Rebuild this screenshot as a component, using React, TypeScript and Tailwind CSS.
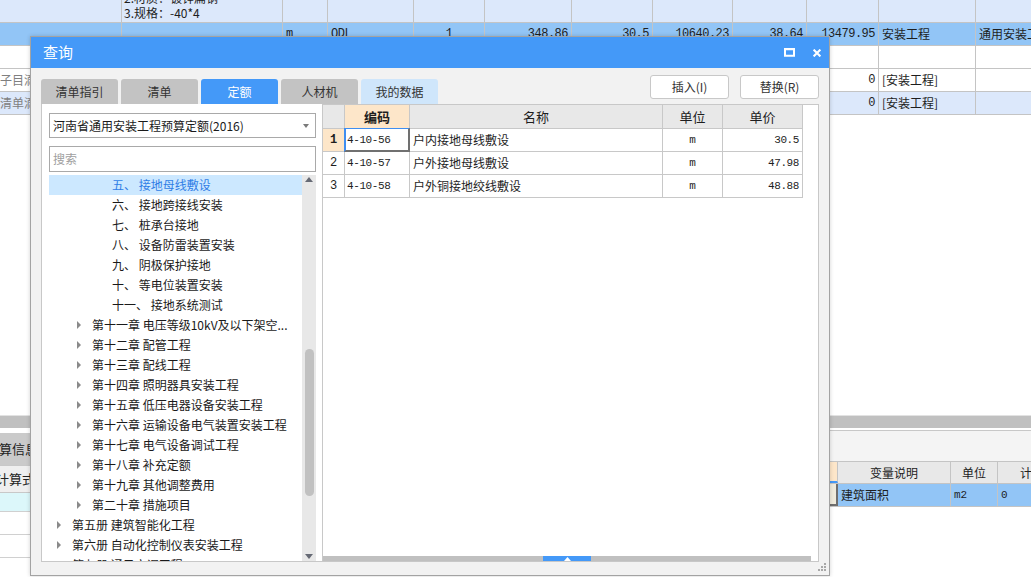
import React from "react";

const CJK = "font-['Noto_Sans_CJK_SC',sans-serif]";
const MONO = "font-['Liberation_Mono','Noto_Sans_CJK_SC',monospace]";

// ---- background sheet ----
const gridCols = [
  "w-[122px]",
  "w-[161px]",
  "w-[45px]",
  "w-[86px]",
  "w-[71px]",
  "w-[87px]",
  "w-[81px]",
  "w-[80px]",
  "w-[74px]",
  "w-[72px]",
  "w-[97px]",
  "w-[60px]",
];

type GCell = { t?: string; a?: "r" | "c"; mono?: boolean; muted?: boolean };

const gridRows: { bg: string; cells: GCell[] }[] = [
  {
    bg: "bg-[#92c5f6]",
    cells: [
      {},
      {},
      { t: "m", mono: true },
      { t: "QDL", mono: true },
      { t: "1", a: "c", mono: true },
      { t: "348.86", a: "r", mono: true },
      { t: "30.5", a: "r", mono: true },
      { t: "10640.23", a: "r", mono: true },
      { t: "38.64", a: "r", mono: true },
      { t: "13479.95", a: "r", mono: true },
      { t: "安装工程" },
      { t: "通用安装工程" },
    ],
  },
  { bg: "bg-white", cells: [{}, {}, {}, {}, {}, {}, {}, {}, {}, {}, {}, {}] },
  {
    bg: "bg-white",
    cells: [
      { t: "子目滴", muted: true },
      {}, {}, {}, {}, {}, {}, {}, {},
      { t: "0", a: "r", mono: true },
      { t: "[安装工程]" },
      {},
    ],
  },
  {
    bg: "bg-[#dce8fb]",
    cells: [
      { t: "清单滴", muted: true },
      {}, {}, {}, {}, {}, {}, {}, {},
      { t: "0", a: "r", mono: true },
      { t: "[安装工程]" },
      {},
    ],
  },
];

function SheetRow({ bg, cells }: { bg: string; cells: GCell[] }) {
  return (
    <div className={`flex h-[23px] border-b border-[#c4c4c4] ${bg}`}>
      {cells.map((c, i) => (
        <div
          key={i}
          className={`${gridCols[i]} shrink-0 h-full border-r border-[#c4c4c4] flex items-center overflow-hidden whitespace-nowrap text-[12px] ${
            c.muted ? "pl-0 pr-[3px]" : "px-[3px]"
          } ${c.a === "r" ? "justify-end" : c.a === "c" ? "justify-center" : ""} ${
            c.mono ? `${MONO} text-[11px] tracking-[-0.5px]` : CJK
          } ${c.muted ? "text-[#808080]" : "text-[#1e1e1e]"}`}
        >
          {c.t}
        </div>
      ))}
    </div>
  );
}

function Sheet() {
  return (
    <div className="flex flex-col h-full">
      {/* first, half scrolled-out row */}
      <div className="flex h-[23px] border-b border-[#c4c4c4] bg-[#dce8fb]">
        {gridCols.map((w, i) => (
          <div key={i} className={`${w} shrink-0 h-full border-r border-[#c4c4c4] overflow-hidden`}>
            {i === 1 && (
              <div className={`${CJK} text-[12px] leading-[15px] text-[#1e1e1e] h-full flex flex-col justify-end pb-[2px] pl-[2px] whitespace-nowrap`}>
                <div>2.材质：镀锌扁钢</div>
                <div>3.规格：-40*4</div>
              </div>
            )}
          </div>
        ))}
      </div>
      {gridRows.map((r, i) => (
        <SheetRow key={i} bg={r.bg} cells={r.cells} />
      ))}
      <div className="flex-1 bg-white" />

      {/* lower pane */}
      <div className="h-[162px] flex flex-col">
        <div className="h-[1px] bg-[#e2e2e2]" />
        <div className="h-[12px] bg-[#c0c0c0]" />
        <div className="flex flex-1">
          <div className="w-[830px] shrink-0 flex flex-col">
            <div className="h-[5px] bg-white" />
            <div className="h-[32px] bg-[#f0f0f0] flex">
              <div className={`${CJK} w-[70px] bg-[#cacaca] flex items-center text-[13px] text-[#222] -ml-[1px]`}>算信息</div>
            </div>
            <div className={`${CJK} h-[28px] bg-[#efefef] border-y border-[#c8c8c8] flex items-center text-[13px] text-[#222] -ml-[4px]`}>
              计算式
            </div>
            <div className="h-[19px] bg-[#dcf7fa] border-b border-[#d0d0d0]" />
            <div className="h-[23px] border-b border-[#d0d0d0]" />
            <div className="h-[23px] border-b border-[#d0d0d0]" />
          </div>
          <div className="flex-1 flex flex-col">
            <div className="h-[2px] bg-white" />
            <div className="h-[31px] bg-[#f4f4f4] border-t border-[#c8c8c8]" />
            <div className={`${CJK} h-[23px] flex bg-[#e8e8e8] border-y border-[#c4c4c4] text-[12px] text-[#222]`}>
              <div className="w-[8px] shrink-0 bg-[#fde6c9] border-r border-[#c4c4c4] border-b-2 border-b-[#4499f8]" />
              <div className="w-[113px] shrink-0 border-r border-[#c4c4c4] flex items-center justify-center">变量说明</div>
              <div className="w-[47px] shrink-0 border-r border-[#c4c4c4] flex items-center justify-center">单位</div>
              <div className="w-[80px] shrink-0 flex items-center justify-center">计算值</div>
            </div>
            <div className={`h-[23px] flex bg-[#92c5f6] border-b border-[#c4c4c4] text-[12px] text-[#1e1e1e]`}>
              <div className="w-[8px] shrink-0 bg-[#efebdd] border-r-2 border-b-2 border-[#6f6f6f]" />
              <div className={`${CJK} w-[113px] shrink-0 border-r border-[#c4c4c4] flex items-center pl-[3px]`}>建筑面积</div>
              <div className={`${MONO} w-[47px] shrink-0 border-r border-[#c4c4c4] flex items-center pl-[3px] text-[11px]`}>m2</div>
              <div className={`${MONO} w-[80px] shrink-0 flex items-center pl-[3px] text-[11px]`}>0</div>
            </div>
            <div className="flex-1 bg-white" />
          </div>
        </div>
      </div>
    </div>
  );
}

// ---- dialog ----
const tabs = [
  { label: "清单指引", cls: "bg-[#c3c3c3] text-[#333]" },
  { label: "清单", cls: "bg-[#c3c3c3] text-[#333]" },
  { label: "定额", cls: "bg-[#4499f8] text-white" },
  { label: "人材机", cls: "bg-[#c3c3c3] text-[#333]" },
  { label: "我的数据", cls: "bg-[#cfe6fb] text-[#333]" },
];

type TreeItem = { text: string; level: 1 | 2 | 3; selected?: boolean };

const tree: TreeItem[] = [
  { text: "五、 接地母线敷设", level: 3, selected: true },
  { text: "六、 接地跨接线安装", level: 3 },
  { text: "七、 桩承台接地", level: 3 },
  { text: "八、 设备防雷装置安装", level: 3 },
  { text: "九、 阴极保护接地", level: 3 },
  { text: "十、 等电位装置安装", level: 3 },
  { text: "十一、 接地系统测试", level: 3 },
  { text: "第十一章 电压等级10kV及以下架空...", level: 2 },
  { text: "第十二章 配管工程", level: 2 },
  { text: "第十三章 配线工程", level: 2 },
  { text: "第十四章 照明器具安装工程", level: 2 },
  { text: "第十五章 低压电器设备安装工程", level: 2 },
  { text: "第十六章 运输设备电气装置安装工程", level: 2 },
  { text: "第十七章 电气设备调试工程", level: 2 },
  { text: "第十八章 补充定额", level: 2 },
  { text: "第十九章 其他调整费用", level: 2 },
  { text: "第二十章 措施项目", level: 2 },
  { text: "第五册 建筑智能化工程", level: 1 },
  { text: "第六册 自动化控制仪表安装工程", level: 1 },
  { text: "第七册 通风空调工程", level: 1 },
];

const levelPad = { 1: "pl-[7px]", 2: "pl-[27px]", 3: "pl-[63px]" };

function TreeRow({ item }: { item: TreeItem }) {
  return (
    <div
      className={`h-[20px] shrink-0 flex items-center whitespace-nowrap text-[12px] ${levelPad[item.level]} ${
        item.selected ? "bg-[#cce8ff] text-[#2f7de6]" : "text-[#1a1a1a]"
      }`}
    >
      {item.level !== 3 && (
        <span className="w-[16px] shrink-0 flex items-center">
          <span className="ml-[1px] w-0 h-0 border-y-[4px] border-y-transparent border-l-[4px] border-l-[#8a8a8a]" />
        </span>
      )}
      <span>{item.text}</span>
    </div>
  );
}

const rows = [
  { n: "1", code: "4-10-56", name: "户内接地母线敷设", unit: "m", price: "30.5", active: true },
  { n: "2", code: "4-10-57", name: "户外接地母线敷设", unit: "m", price: "47.98" },
  { n: "3", code: "4-10-58", name: "户外铜接地绞线敷设", unit: "m", price: "48.88" },
];

function QuotaTable() {
  return (
    <div className="w-[480px] text-[#1e1e1e]">
      <div className={`${CJK} flex h-[24px] border-b border-[#c8c8c8] text-[13px]`}>
        <div className="w-[22px] shrink-0 bg-[#e8e8e8] border-r border-[#c8c8c8]" />
        <div className="w-[65px] shrink-0 bg-[#fde6c9] border-r border-[#c8c8c8] flex items-center justify-center font-bold">编码</div>
        <div className="w-[253px] shrink-0 bg-[#e8e8e8] border-r border-[#c8c8c8] flex items-center justify-center">名称</div>
        <div className="w-[60px] shrink-0 bg-[#e8e8e8] border-r border-[#c8c8c8] flex items-center justify-center">单位</div>
        <div className="w-[80px] shrink-0 bg-[#e8e8e8] border-r border-[#c8c8c8] flex items-center justify-center">单价</div>
      </div>
      {rows.map((r) => (
        <div key={r.n} className="flex h-[23px] border-b border-[#c8c8c8] text-[12px]">
          <div
            className={`${MONO} w-[22px] shrink-0 border-r border-[#c8c8c8] flex items-center justify-center text-[12px] ${
              r.active ? "bg-[#fde6c9] font-bold" : "bg-white"
            }`}
          >
            {r.n}
          </div>
          <div className={`${MONO} relative w-[65px] shrink-0 border-r border-[#c8c8c8] flex items-center pl-[2px] text-[11px] tracking-[-0.4px]`}>
            {r.code}
            {r.active && (
              <div className="pointer-events-none absolute -left-[1px] -top-[1px] -right-[1px] -bottom-[1px] border-l-2 border-t border-l-[#3f8ef0] border-t-[#3f8ef0] border-r-2 border-b-2 border-r-[#707070] border-b-[#707070]" />
            )}
          </div>
          <div className={`${CJK} w-[253px] shrink-0 border-r border-[#c8c8c8] flex items-center pl-[3px]`}>{r.name}</div>
          <div className={`${MONO} w-[60px] shrink-0 border-r border-[#c8c8c8] flex items-center justify-center text-[11px]`}>{r.unit}</div>
          <div className={`${MONO} w-[80px] shrink-0 border-r border-[#c8c8c8] flex items-center justify-end pr-[3px] text-[11px] tracking-[-0.4px]`}>
            {r.price}
          </div>
        </div>
      ))}
    </div>
  );
}

function Dialog() {
  return (
    <div className={`${CJK} absolute left-[30px] top-[36px] w-[800px] h-[540px] border border-[#a3a3a3] bg-[#f2f2f2] flex flex-col shadow-[0_0_4px_rgba(0,0,0,0.18)]`}>
      {/* title bar */}
      <div className="h-[31px] shrink-0 bg-[#4499f8] flex items-center pl-[12px] pr-[8px]">
        <span className="text-[15px] text-white">查询</span>
        <div className="ml-auto flex items-center gap-[18px]">
          <svg width="11" height="9" viewBox="0 0 11 9">
            <rect x="1" y="1.25" width="9" height="6.5" fill="none" stroke="white" strokeWidth="2" />
            <rect x="0" y="0" width="11" height="1.5" fill="white" />
          </svg>
          <svg width="8" height="8" viewBox="0 0 8 8">
            <path d="M0.6 0.6 L7.4 7.4 M7.4 0.6 L0.6 7.4" stroke="white" strokeWidth="2.1" />
          </svg>
        </div>
      </div>

      <div className="flex-1 flex flex-col px-[10px]">
        {/* tabs + actions */}
        <div className="h-[36px] shrink-0 flex justify-between">
          <div className="self-end flex gap-[3px]">
            {tabs.map((t) => (
              <div key={t.label} className={`w-[77px] h-[25px] rounded-t-[3px] flex items-center justify-center text-[12px] ${t.cls}`}>
                {t.label}
              </div>
            ))}
          </div>
          <div className="mt-[7px] flex gap-[11px]">
            {["插入(I)", "替换(R)"].map((b) => (
              <button
                key={b}
                className="w-[79px] h-[24px] bg-white border border-[#c8c8c8] rounded-[3px] text-[12px] text-[#333] flex items-center justify-center"
              >
                {b}
              </button>
            ))}
          </div>
        </div>

        {/* panels */}
        <div className="h-[458px] shrink-0 flex">
          {/* left: library + tree */}
          <div className="w-[281px] shrink-0 bg-white border-l border-b border-[#c8c8c8] pl-[7px] pr-[6px] pt-[9px] flex flex-col">
            <div className="h-[25px] shrink-0 border border-[#a9a9a9] flex items-center justify-between pl-[3px] pr-[6px] text-[12px] text-[#1a1a1a]">
              <span>河南省通用安装工程预算定额(2016)</span>
              <span className="w-0 h-0 border-x-[3px] border-x-transparent border-t-[4px] border-t-[#7a7a7a]" />
            </div>
            <div className="mt-[8px] h-[26px] shrink-0 border border-[#a9a9a9] flex items-center pl-[3px] text-[12px] text-[#a0a0a0]">
              搜索
            </div>
            <div className="mt-[3px] flex-1 min-h-0 flex">
              <div className="w-[253px] shrink-0 overflow-hidden flex flex-col">
                {tree.map((it) => (
                  <TreeRow key={it.text} item={it} />
                ))}
              </div>
              <div className="w-[14px] shrink-0 bg-[#e8e8e8] flex flex-col items-center pt-[2px] pb-[2px]">
                <svg width="8" height="5" viewBox="0 0 8 5" className="shrink-0">
                  <polygon points="0,5 4,0 8,5" fill="#666a75" />
                </svg>
                <div className="h-[167px] shrink-0" />
                <div className="w-[9px] h-[147px] shrink-0 rounded-full bg-[#c1c1c1]" />
                <div className="flex-1" />
                <svg width="8" height="5" viewBox="0 0 8 5" className="shrink-0">
                  <polygon points="0,0 8,0 4,5" fill="#666a75" />
                </svg>
              </div>
            </div>
          </div>

          {/* right: results */}
          <div className="flex-1 bg-white border border-[#c8c8c8] flex flex-col">
            <QuotaTable />
            <div className="flex-1" />
            <div className="h-[5px] mr-[7px] bg-[#c0c0c0] flex">
              <div className="w-[220px] shrink-0" />
              <div className="w-[48px] shrink-0 bg-[#4499f8] flex items-center justify-center">
                <svg width="7" height="4" viewBox="0 0 7 4">
                  <polygon points="0,4 3.5,0 7,4" fill="white" />
                </svg>
              </div>
            </div>
          </div>
        </div>

        <div className="flex-1" />
      </div>

      {/* resize grip */}
      <svg width="9" height="9" viewBox="0 0 9 9" className="absolute right-[2px] bottom-[3px]">
        <rect x="6" y="0" width="2" height="2" fill="#a8a8a8" />
        <rect x="3" y="3" width="2" height="2" fill="#a8a8a8" />
        <rect x="6" y="3" width="2" height="2" fill="#a8a8a8" />
        <rect x="0" y="6" width="2" height="2" fill="#a8a8a8" />
        <rect x="3" y="6" width="2" height="2" fill="#a8a8a8" />
        <rect x="6" y="6" width="2" height="2" fill="#a8a8a8" />
      </svg>
    </div>
  );
}

export default function App() {
  return (
    <div className="relative w-[1031px] h-[577px] overflow-hidden bg-white">
      <Sheet />
      <Dialog />
    </div>
  );
}
